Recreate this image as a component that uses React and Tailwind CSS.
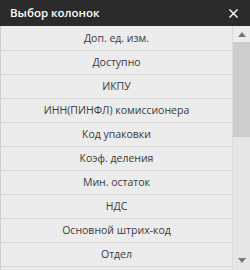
import React from 'react';

const columns = [
  'Доп. ед. изм.',
  'Доступно',
  'ИКПУ',
  'ИНН(ПИНФЛ) комиссионера',
  'Код упаковки',
  'Коэф. деления',
  'Мин. остаток',
  'НДС',
  'Основной штрих-код',
  'Отдел',
];

const App = () => {
  return (
    <div
      className="w-[250px] h-[270px] flex flex-col bg-[#ececec] overflow-hidden"
      style={{ fontFamily: '"Open Sans", "Noto Sans", sans-serif' }}
    >
      <div className="h-[26px] shrink-0 bg-[#2b2b2b] flex items-center justify-between pl-[10px] pr-[12px]">
        <span className="text-white text-[11.5px] font-semibold">Выбор колонок</span>
        <svg width="9" height="9" viewBox="0 0 9 9">
          <path d="M0.5 0.5L8.5 8.5M8.5 0.5L0.5 8.5" stroke="#fff" strokeWidth="1.4" />
        </svg>
      </div>
      <div className="flex flex-1 min-h-0 border-l border-[#d0d0d0]">
        <div className="flex-1 flex flex-col pt-[1px]">
          {columns.map((c) => (
            <div
              key={c}
              className="h-[24px] shrink-0 flex items-center justify-center border-b border-[#d6d6d6] text-[10.5px] text-[#3a3a3a]"
            >
              {c}
            </div>
          ))}
        </div>
        <div className="w-[18px] shrink-0 flex flex-col bg-[#e6e6e6] border-l border-[#dcdcdc]">
          <div className="h-[16px] shrink-0 flex items-center justify-center bg-[#ececec]">
            <svg width="8" height="5" viewBox="0 0 8 5">
              <path d="M4 0L8 5H0Z" fill="#777" />
            </svg>
          </div>
          <div className="h-[95px] shrink-0 bg-[#cdcdcd]" />
          <div className="flex-1" />
          <div className="h-[16px] shrink-0 flex items-center justify-center mb-[2px]">
            <svg width="8" height="5" viewBox="0 0 8 5">
              <path d="M0 0H8L4 5Z" fill="#777" />
            </svg>
          </div>
        </div>
      </div>
    </div>
  );
};

export default App;
